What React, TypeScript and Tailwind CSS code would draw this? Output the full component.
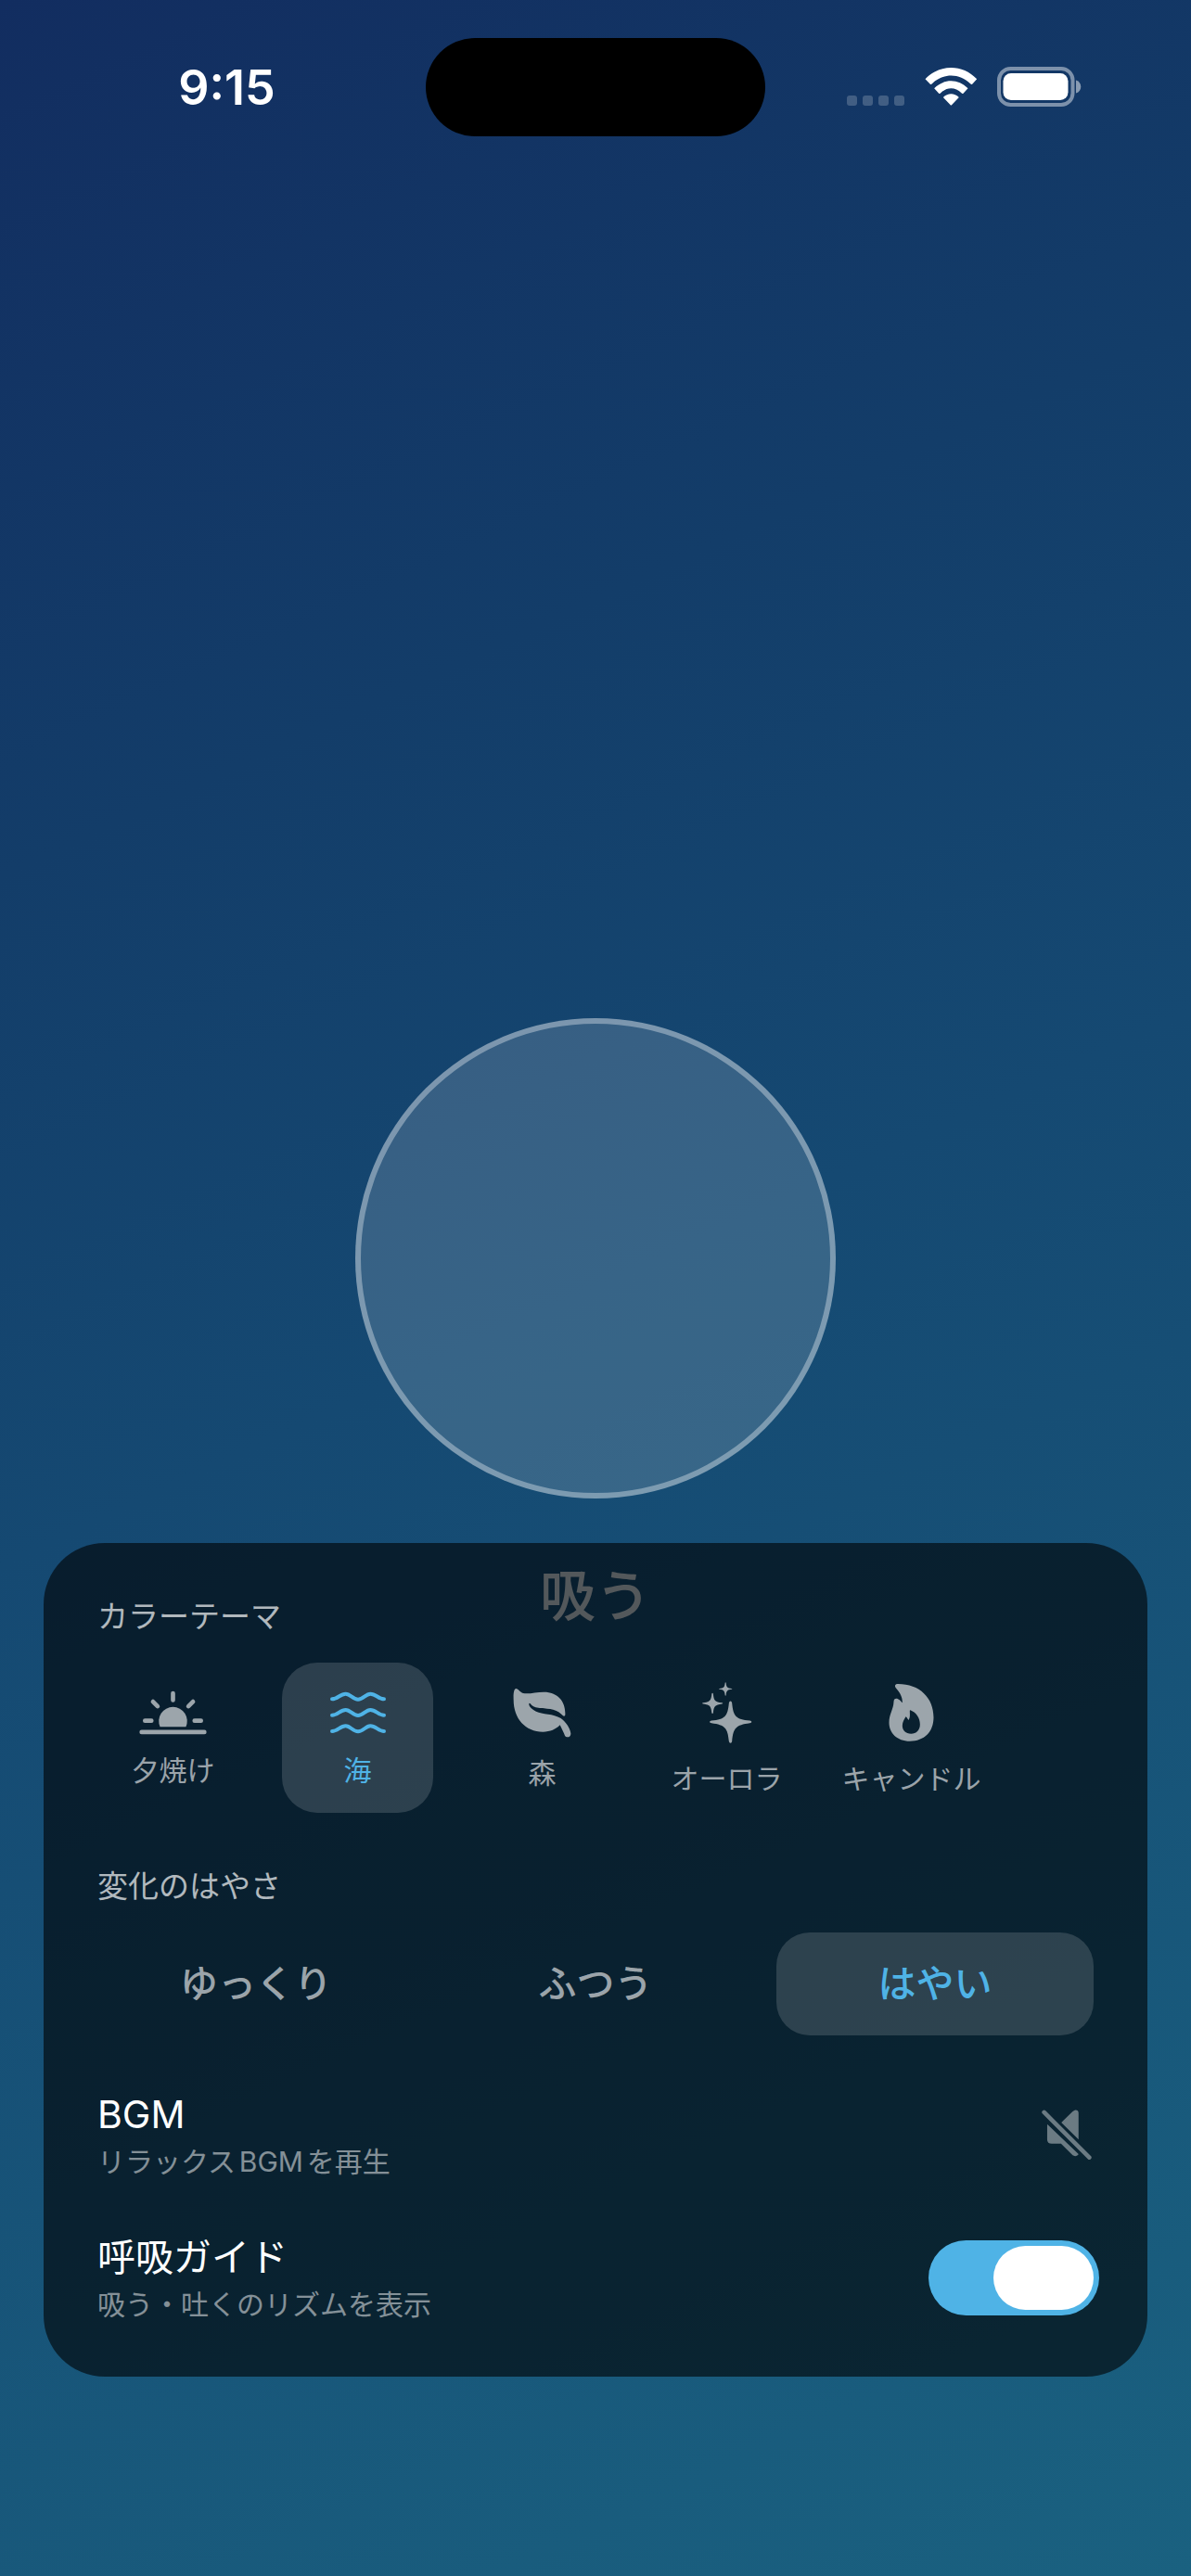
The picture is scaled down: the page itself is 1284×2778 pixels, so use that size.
import { useState, type ReactNode } from 'react';

const SunsetIcon = () => (
  <svg viewBox="179 127 220 144" className="h-[48px] w-[73px]" fill="none" stroke="currentColor" strokeLinecap="round" strokeWidth="14" aria-hidden="true">
    <path d="M247 245A46 46 0 1 1 331 245Z" fill="currentColor" stroke="none" />
    <path d="M187 262H391M289 136V158M224 163L239 178M354 163L339 178M198 225H219M359 225H380" />
  </svg>
);

const WAVE = 'C819 156 827 139 845 139C861 139 868 157 885 157C902 157 909 139 925 139C943 139 951 156 969 156';

const WavesIcon = () => (
  <svg viewBox="795 128 180 144" className="h-[48px] w-[60px]" fill="none" stroke="currentColor" strokeLinecap="round" strokeWidth="12" aria-hidden="true">
    {[0, 52, 104].map((y) => (
      <path key={y} d={`M801 156${WAVE}`} transform={`translate(0 ${y})`} />
    ))}
  </svg>
);

const LeafIcon = () => (
  <svg viewBox="215 120 189 162" className="h-[54px] w-[63px]" fill="currentColor" aria-hidden="true">
    <path d="M225 123C218 123 216 140 217 160C217 220 255 263 312 263C335 263 354 255 367 241C373 252 379 266 383 275C387 283 403 282 402 268C400 250 385 230 370 219C345 203 310 207 290 197C275 190 266 180 267 172C268 168 272 172 275 176C290 190 320 184 345 191C360 195 370 203 377 211C380 214 384 212 384 208C386 165 360 134 315 134C290 134 265 142 248 138C238 135 232 123 225 123Z" />
  </svg>
);

const STAR =
  'M0-67Q4-67 5-60C9-18 17-8 62-4Q68-3 68 0Q68 3 62 4C17 10 9 20 5 62Q4 68 0 68Q-4 68-5 62C-9 20-17 10-61 4Q-67 3-67 0Q-67-3-61-4C-17-8-9-18-5-60Q-4-67 0-67Z';

const SparklesIcon = () => (
  <svg viewBox="167 102 161 197" className="h-[66px] w-[54px]" fill="currentColor" aria-hidden="true">
    <path d={STAR} transform="translate(258 230)" />
    <path d={STAR} transform="translate(200 170) scale(.49)" />
    <path d={STAR} transform="translate(242 124) scale(.32)" />
  </svg>
);

const FlameIcon = () => (
  <svg viewBox="770 101 146 198" className="h-[66px] w-[49px]" fill="currentColor" fillRule="evenodd" aria-hidden="true">
    <path d="M800 107C870 107 915 152 915 215C915 262 885 292 838 292C797 292 771 265 771 232C771 205 785 190 786 165C786 152 797 152 805 159C808 162 811 166 814 168C815 150 806 134 794 121C787 113 791 107 800 107ZM840 192C860 200 871 218 871 238C871 256 859 268 842 268C825 268 814 257 814 242C814 230 820 222 825 213C828 213 830 220 834 224C840 216 838 204 838 195Q838 191 840 192Z" />
  </svg>
);

const MutedSpeakerIcon = () => (
  <svg viewBox="1029 644 163 163" className="size-[54px]" fill="currentColor" aria-hidden="true">
    <path d="M1093 686L1130 650C1138 642 1149 644 1149 655V741Z" />
    <path d="M1048 692L1149 789C1146 796 1136 797 1130 793L1092 755H1062Q1047 755 1047 741V694Z" />
    <path d="M1037 653L1184 800" stroke="currentColor" strokeWidth="14" strokeLinecap="round" />
  </svg>
);

const WifiIcon = () => (
  <svg viewBox="410 98 170 123" className="h-[41px] w-[57px]" fill="currentColor" aria-hidden="true">
    <path d="M411 135C458 86 532 86 578 135L563 151Q560 153 557 150C522 115 468 115 433 150Q430 153 427 151Z" />
    <path d="M440 165C471 133 518 133 549 165L534 181Q531 183 528 180C508 160 481 160 461 180Q458 183 455 181Z" />
    <path d="M469 194C484 179 505 179 520 194L497 218Q494.500 221 492 218Z" />
  </svg>
);

const BatteryIcon = () => (
  <svg viewBox="0 0 91 43" className="h-[43px] w-[91px]" fill="none" aria-hidden="true">
    <rect x="2" y="2" width="79.500" height="39" rx="12.500" stroke="white" strokeOpacity=".45" strokeWidth="4" />
    <rect x="6.500" y="7" width="70" height="29" rx="8.500" fill="white" />
    <path d="M85 14.500C92 16.500 92 26.500 85 28.500Z" fill="white" fillOpacity=".5" />
  </svg>
);

const themes: { id: string; label: string; icon: ReactNode }[] = [
  { id: 'sunset', label: '夕焼け', icon: <SunsetIcon /> },
  { id: 'sea', label: '海', icon: <WavesIcon /> },
  { id: 'forest', label: '森', icon: <LeafIcon /> },
  { id: 'aurora', label: 'オーロラ', icon: <SparklesIcon /> },
  { id: 'candle', label: 'キャンドル', icon: <FlameIcon /> },
];

const speeds = ['ゆっくり', 'ふつう', 'はやい'];

function StatusBar() {
  return (
    <header className="grid h-[168px] grid-cols-[1fr_366px_1fr] items-start pt-[41px] text-white">
      <time className="flex h-[108px] items-center justify-center pl-[30px] text-[52px] leading-none font-semibold">9:15</time>
      <div className="h-[106px] rounded-full bg-black" />
      <div className="flex h-[104px] items-center justify-end pr-[118px]">
        <div className="mr-[22px] flex gap-[6px] pt-[30px]">
          {[0, 1, 2, 3].map((i) => (
            <span key={i} className="size-[11px] rounded-[3px] bg-white/20" />
          ))}
        </div>
        <div className="mr-[21px]">
          <WifiIcon />
        </div>
        <BatteryIcon />
      </div>
    </header>
  );
}

function SettingText({ title, detail }: { title: string; detail: string }) {
  return (
    <span className="flex flex-col gap-1">
      <span className="text-[41px] leading-[54px] text-white">{title}</span>
      <span className="text-[30px] leading-[40px] text-white/50 [text-autospace:normal]">{detail}</span>
    </span>
  );
}

export default function App() {
  const [theme, setTheme] = useState('sea');
  const [speed, setSpeed] = useState('はやい');
  const [bgm, setBgm] = useState(false);
  const [guide, setGuide] = useState(true);

  return (
    <div
      lang="ja"
      className="flex min-h-screen flex-col bg-[linear-gradient(155deg,#122d60_0%,#133d69_28%,#154972_50%,#1a6180_100%)] font-[Inter,'Noto_Sans_CJK_JP',sans-serif]"
    >
      <StatusBar />
      <main className="grid flex-1 grid-cols-1">
        <section className="col-start-1 row-start-1 flex flex-col items-center justify-center gap-[60px] pb-[83px]">
          <div className="size-[518px] rounded-full border-[6px] border-white/35 bg-white/15 bg-clip-border" />
          <p className="text-[60px] leading-[90px] font-medium text-white/80">吸う</p>
        </section>

        <section className="z-10 col-start-1 row-start-1 mx-[47px] mb-[215px] flex flex-col gap-[58px] self-end rounded-[66px] bg-black/60 p-[58px]">
          <div className="flex flex-col gap-[29px]">
            <h2 className="text-[33px] leading-[42px] text-white/70">カラーテーマ</h2>
            <div className="flex gap-[36px]">
              {themes.map((t) => (
                <button
                  key={t.id}
                  type="button"
                  aria-pressed={theme === t.id}
                  onClick={() => setTheme(t.id)}
                  className={`flex h-[162px] w-[163px] flex-col items-center justify-center gap-[21px] rounded-[38px] ${
                    theme === t.id ? 'bg-white/15 text-[#4fb3e6]' : 'text-white/60'
                  }`}
                >
                  {t.icon}
                  <span className="text-[30px] leading-[34px] whitespace-nowrap">{t.label}</span>
                </button>
              ))}
            </div>
          </div>

          <div className="flex flex-col gap-[29px]">
            <h2 className="text-[33px] leading-[42px] text-white/70">変化のはやさ</h2>
            <div className="grid grid-cols-3 gap-6">
              {speeds.map((s) => (
                <button
                  key={s}
                  type="button"
                  aria-pressed={speed === s}
                  onClick={() => setSpeed(s)}
                  className={`h-[111px] rounded-[36px] text-[41px] font-medium ${
                    speed === s ? 'bg-white/15 text-[#4fb3e6]' : 'text-white/60'
                  }`}
                >
                  {s}
                </button>
              ))}
            </div>
          </div>

          <div className="flex flex-col gap-[56px]">
            <div className="flex items-center justify-between">
              <SettingText title="BGM" detail="リラックスBGMを再生" />
              <button type="button" aria-label="BGM" aria-pressed={bgm} onClick={() => setBgm(!bgm)} className="pr-[2px] text-white/40">
                <MutedSpeakerIcon />
              </button>
            </div>

            <label className="flex items-center justify-between">
              <SettingText title="呼吸ガイド" detail="吸う・吐くのリズムを表示" />
              <input
                type="checkbox"
                role="switch"
                checked={guide}
                onChange={(e) => setGuide(e.target.checked)}
                className="-mr-[6px] flex h-[81px] w-[184px] appearance-none rounded-full bg-white/20 p-[6px] before:h-full before:w-[108px] before:rounded-full before:bg-white checked:justify-end checked:bg-[#4fb3e6]"
              />
            </label>
          </div>
        </section>
      </main>
    </div>
  );
}
